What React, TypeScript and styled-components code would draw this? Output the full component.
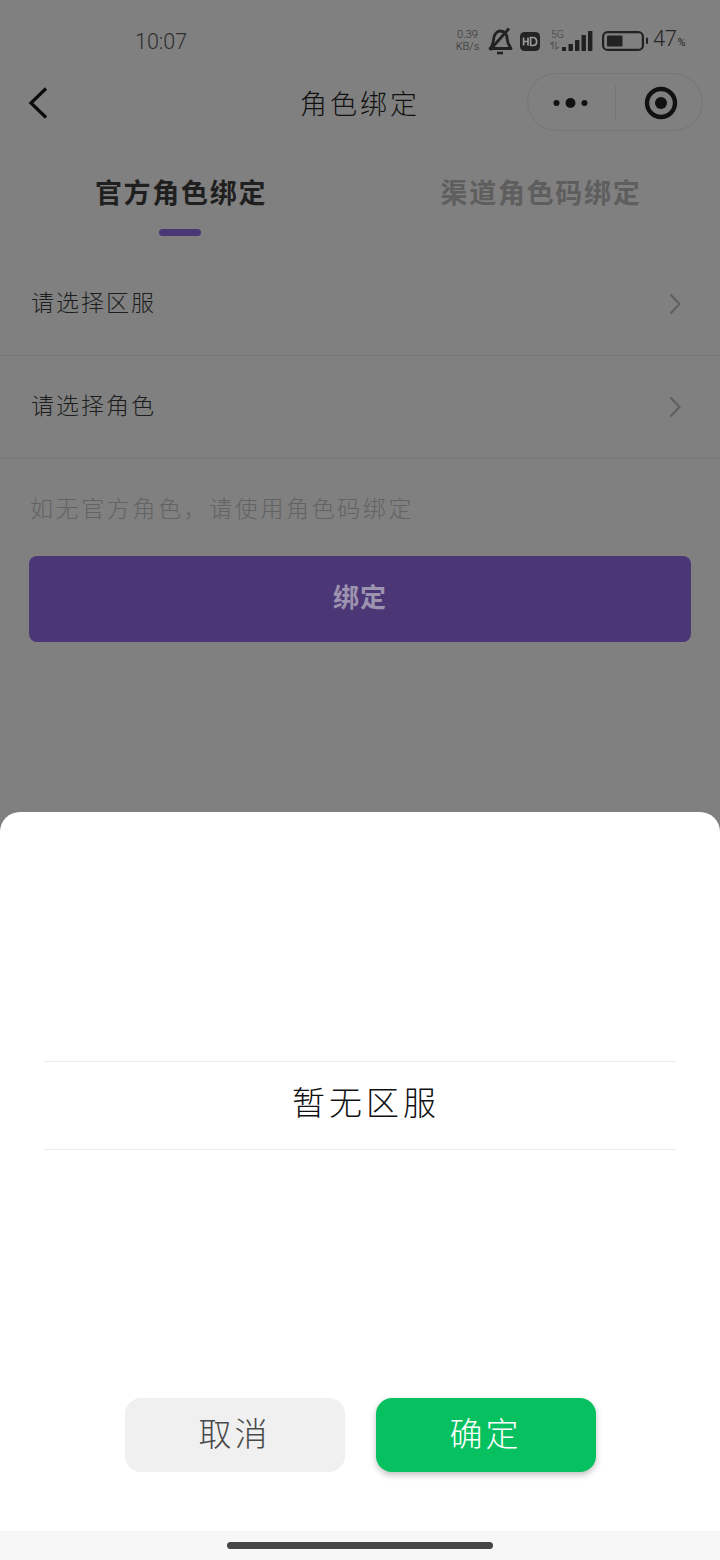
import React from "react";
import styled, { createGlobalStyle } from "styled-components";

const Global = createGlobalStyle`
  html, body { margin: 0; padding: 0; background: #808080; }
  * { box-sizing: border-box; }
  body { font-family: "Noto Sans CJK SC", "Noto Sans", sans-serif; }
`;

const Screen = styled.div`
  width: 720px;
  height: 1560px;
  display: flex;
  flex-direction: column;
  background: #808080;
  overflow: hidden;
`;
const Dimmed = styled.div`
  height: 812px;
  display: flex;
  flex-direction: column;
`;
const StatusBar = styled.div`
  height: 73px;
  padding: 24px 34px 0 135px;
  display: flex;
  align-items: flex-start;
  justify-content: space-between;
`;
const Clock = styled.div`
  font-family: Roboto, sans-serif;
  font-size: 21.5px;
  line-height: 35px;
  color: #2e2e2e;
  font-weight: 300;
`;
const StatusIcons = styled.div`
  display: flex;
  align-items: center;
  height: 34px;
`;
const Speed = styled.div`
  width: 27px;
  margin-right: 6px;
  font-family: Roboto, sans-serif;
  font-weight: 300;
  font-size: 11px;
  line-height: 12px;
  color: #303030;
  text-align: center;
`;
const BatteryText = styled.div`
  width: 33px;
  white-space: nowrap;
  font-family: Roboto, sans-serif;
  font-weight: 300;
  font-size: 22px;
  letter-spacing: -0.4px;
  line-height: 30px;
  color: #262626;
  margin-left: 5px;
  small { font-size: 11px; font-weight: 400; letter-spacing: 0; margin-left: 1px; }
`;
const NavBar = styled.div`
  height: 60px;
  padding: 0 17px 0 24px;
  display: flex;
  align-items: center;
  justify-content: space-between;
  position: relative;
`;
const NavTitle = styled.div`
  position: absolute;
  left: 0;
  right: 0;
  top: 0;
  text-align: center;
  font-size: 27px;
  font-weight: 300;
  letter-spacing: 3px;
  color: #111;
  line-height: 60px;
`;
const Capsule = styled.div`
  width: 176px;
  height: 58px;
  margin-bottom: 2px;
  border: 1px solid #767676;
  border-radius: 29px;
  display: flex;
  align-items: center;
`;
const CapsulePart = styled.div`
  flex: 1;
  display: flex;
  align-items: center;
  justify-content: center;
  height: 35px;
  padding-top: 2px;
  & + & {
    border-left: 1px solid #767676;
    svg { margin-left: 4px; }
  }
`;
const Tabs = styled.div`
  height: 120px;
  display: flex;
`;
const Tab = styled.div<{ $active?: boolean }>`
  width: 360px;
  display: flex;
  flex-direction: column;
  align-items: center;
  padding: 39px 0 0 2px;
  font-size: 27px;
  line-height: 40px;
  font-weight: 700;
  letter-spacing: 1.7px;
  color: ${(p) => (p.$active ? "#1f1f1f" : "#5e5e5e")};
`;
const TabMark = styled.div`
  width: 42px;
  height: 7px;
  margin: 17px 2px 0 0;
  border-radius: 4px;
  background: #4c3776;
`;
const Row = styled.div`
  height: 103px;
  padding: 0 39px 0 31px;
  display: flex;
  align-items: center;
  justify-content: space-between;
  border-bottom: 1px solid #787878;
  font-size: 23px;
  font-weight: 300;
  letter-spacing: 2px;
  color: #1d1d1d;
`;
const RowLabel = styled.span`
  margin-bottom: 6px;
`;
const Note = styled.div`
  padding: 31px 0 0 30px;
  height: 97px;
  font-size: 23px;
  font-weight: 300;
  letter-spacing: 2.6px;
  line-height: 34px;
  color: #636363;
`;
const BindButton = styled.div`
  width: 662px;
  height: 86px;
  margin-left: 29px;
  padding-bottom: 7px;
  border-radius: 8px;
  background: #4c3776;
  color: #9c93ae;
  display: flex;
  align-items: center;
  justify-content: center;
  font-size: 26px;
  font-weight: 700;
  letter-spacing: 1px;
`;
const Sheet = styled.div`
  height: 719px;
  background: #fff;
  border-radius: 20px 20px 0 0;
  display: flex;
  flex-direction: column;
  align-items: center;
  padding-top: 249px;
`;
const PickerItem = styled.div`
  width: 632px;
  height: 89px;
  border-top: 1px solid #ececec;
  border-bottom: 1px solid #ececec;
  display: flex;
  align-items: center;
  justify-content: center;
  padding: 0 0 9px 12px;
  font-size: 33px;
  font-weight: 300;
  letter-spacing: 4px;
  color: #111;
`;
const Actions = styled.div`
  margin-top: 248px;
  display: flex;
  gap: 31px;
`;
const ActionButton = styled.div<{ $primary?: boolean }>`
  width: 220px;
  height: 74px;
  padding-bottom: 7px;
  border-radius: 16px;
  display: flex;
  align-items: center;
  justify-content: center;
  font-size: 33px;
  font-weight: 300;
  letter-spacing: 3px;
  background: ${(p) => (p.$primary ? "#07c160" : "#f0f0f0")};
  color: ${(p) => (p.$primary ? "#fff" : "#4a4a4a")};
  box-shadow: ${(p) => (p.$primary ? "0 3px 6px rgba(0,0,0,0.25)" : "none")};
`;
const HomeArea = styled.div`
  height: 29px;
  background: #f7f7f7;
  display: flex;
  justify-content: center;
  padding-top: 11px;
`;
const HomeBar = styled.div`
  width: 266px;
  height: 7px;
  border-radius: 4px;
  background: #464646;
`;

const Chevron = () => (
  <svg width="12" height="22" viewBox="0 0 12 22" fill="none">
    <path d="M1.5 1.5 L10.5 11 L1.5 20.5" stroke="#5e5e5e" strokeWidth="2" />
  </svg>
);

const Back = () => (
  <svg width="28" height="36" viewBox="0 0 28 36" fill="none">
    <path d="M22 3.5 L7 18 L22 32.5" stroke="#0b0b0b" strokeWidth="3.2" />
  </svg>
);

const Bell = () => (
  <svg width="26" height="28" viewBox="0 0 26 28" fill="none" style={{ marginRight: 7 }}>
    <path d="M3 21.5 C6 19 6 15 7 10 C8 6 11 4 13 4 C17 4 20 7 20 11 L21 16 L24 21.5 Z" stroke="#222" strokeWidth="2.8" strokeLinejoin="round" />
    <path d="M10 26 H16" stroke="#222" strokeWidth="2.6" />
    <path d="M3 23 L22 1.5" stroke="#222" strokeWidth="2.8" />
  </svg>
);

const HD = () => (
  <svg width="20" height="19" viewBox="0 0 20 19" style={{ marginRight: 9 }}>
    <rect width="20" height="19" rx="4.5" fill="#232323" />
    <path d="M3.6 5.5 V13.5 M8 5.5 V13.5 M3.6 9.5 H8" stroke="#9a9a9a" strokeWidth="1.7" fill="none" />
    <path d="M10.6 5.5 V13.5 H13 C15.3 13.5 16.6 12 16.6 9.5 C16.6 7 15.3 5.5 13 5.5 Z" stroke="#9a9a9a" strokeWidth="1.7" fill="none" />
  </svg>
);

const Signal = () => (
  <svg width="44" height="24" viewBox="0 0 44 24" style={{ marginRight: 9 }}>
    <text x="2" y="9" fontSize="10.5" fontWeight="300" fontFamily="Roboto, sans-serif" fill="#404040">5G</text>
    <path d="M1 15 L4 13 V20 M4 15 H1 M7 13 V20 L10 18" stroke="#585858" strokeWidth="1.2" fill="none" />
    <rect x="13" y="18" width="4" height="4" fill="#202020" />
    <rect x="19.5" y="15" width="4.4" height="7" rx="0.6" fill="#202020" />
    <rect x="26" y="11" width="4.4" height="11" rx="0.6" fill="#202020" />
    <rect x="32.5" y="6" width="4.4" height="16" rx="0.6" fill="#202020" />
    <rect x="39" y="2" width="4.4" height="20" rx="0.6" fill="#202020" />
  </svg>
);

const Battery = () => (
  <svg width="46" height="20" viewBox="0 0 46 20">
    <rect x="1.1" y="1.1" width="39.8" height="17.8" rx="4.5" fill="none" stroke="#222" strokeWidth="2.2" />
    <rect x="5" y="4.5" width="15.5" height="11" rx="1" fill="#222" />
    <rect x="44" y="6.5" width="2" height="6.5" rx="1" fill="#222" />
  </svg>
);

const Dots = () => (
  <svg width="40" height="14" viewBox="0 0 40 14">
    <circle cx="5.5" cy="7" r="3" fill="#111" />
    <circle cx="19.5" cy="7" r="5" fill="#111" />
    <circle cx="33.5" cy="7" r="3" fill="#111" />
  </svg>
);

const Target = () => (
  <svg width="34" height="34" viewBox="0 0 34 34">
    <circle cx="17" cy="17" r="14" fill="none" stroke="#111" strokeWidth="4.4" />
    <circle cx="17" cy="17" r="6" fill="#111" />
  </svg>
);

export default function App() {
  return (
    <Screen>
      <Global />
      <Dimmed>
        <StatusBar>
          <Clock>10:07</Clock>
          <StatusIcons>
            <Speed>0.39<br />KB/s</Speed>
            <Bell />
            <HD />
            <Signal />
            <Battery />
            <BatteryText>47<small>%</small></BatteryText>
          </StatusIcons>
        </StatusBar>
        <NavBar>
          <NavTitle>角色绑定</NavTitle>
          <Back />
          <Capsule>
            <CapsulePart><Dots /></CapsulePart>
            <CapsulePart><Target /></CapsulePart>
          </Capsule>
        </NavBar>
        <Tabs>
          <Tab $active>
            官方角色绑定
            <TabMark />
          </Tab>
          <Tab>渠道角色码绑定</Tab>
        </Tabs>
        <Row><RowLabel>请选择区服</RowLabel><Chevron /></Row>
        <Row><RowLabel>请选择角色</RowLabel><Chevron /></Row>
        <Note>如无官方角色，请使用角色码绑定</Note>
        <BindButton>绑定</BindButton>
      </Dimmed>
      <Sheet>
        <PickerItem>暂无区服</PickerItem>
        <Actions>
          <ActionButton>取消</ActionButton>
          <ActionButton $primary>确定</ActionButton>
        </Actions>
      </Sheet>
      <HomeArea><HomeBar /></HomeArea>
    </Screen>
  );
}
